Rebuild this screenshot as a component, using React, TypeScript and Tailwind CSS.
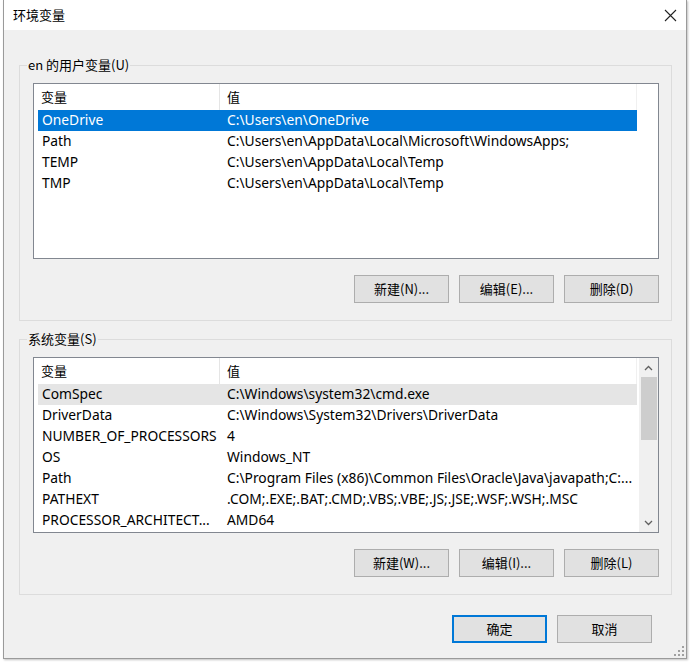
import React from 'react'

type EnvRow = {
  name: string
  value: string
}

const userVars: EnvRow[] = [
  { name: 'OneDrive', value: 'C:\\Users\\en\\OneDrive' },
  { name: 'Path', value: 'C:\\Users\\en\\AppData\\Local\\Microsoft\\WindowsApps;' },
  { name: 'TEMP', value: 'C:\\Users\\en\\AppData\\Local\\Temp' },
  { name: 'TMP', value: 'C:\\Users\\en\\AppData\\Local\\Temp' },
]

const systemVars: EnvRow[] = [
  { name: 'ComSpec', value: 'C:\\Windows\\system32\\cmd.exe' },
  { name: 'DriverData', value: 'C:\\Windows\\System32\\Drivers\\DriverData' },
  { name: 'NUMBER_OF_PROCESSORS', value: '4' },
  { name: 'OS', value: 'Windows_NT' },
  { name: 'Path', value: 'C:\\Program Files (x86)\\Common Files\\Oracle\\Java\\javapath;C:...' },
  { name: 'PATHEXT', value: '.COM;.EXE;.BAT;.CMD;.VBS;.VBE;.JS;.JSE;.WSF;.WSH;.MSC' },
  { name: 'PROCESSOR_ARCHITECT...', value: 'AMD64' },
]

const cjk = "font-['Microsoft_YaHei','Noto_Sans_CJK_SC',sans-serif]"
const latin = "font-['Segoe_UI','Noto_Sans','Noto_Sans_CJK_SC',sans-serif]"

function DialogButton({ label, primary }: { label: string; primary?: boolean }) {
  return (
    <button
      className={`w-[95px] h-[28px] flex items-center justify-center bg-[#e1e1e1] text-[13px] text-black ${cjk} ${
        primary ? 'border-2 border-[#0078d7]' : 'border border-[#adadad]'
      }`}
    >
      {label}
    </button>
  )
}

function VarList({
  rows,
  selected,
  hover,
  scrollbar,
}: {
  rows: EnvRow[]
  selected?: number
  hover?: number
  scrollbar?: boolean
}) {
  return (
    <div className="h-[176px] border border-[#828790] bg-white flex overflow-hidden">
      <div className="flex-1 flex flex-col">
        <div className="h-[26px] flex items-center text-[13px] text-black shrink-0">
          <div className={`w-[186px] pl-[7px] border-r border-[#e5e5e5] h-full flex items-center ${cjk}`}>变量</div>
          <div className={`w-[417px] pl-[7px] border-r border-[#f0f0f0] h-full flex items-center ${cjk}`}>值</div>
        </div>
        {rows.map((row, i) => (
          <div
            key={row.name + i}
            className={`ml-[4px] w-[599px] h-[21px] flex items-center text-[13.8px] whitespace-nowrap overflow-hidden ${latin} ${
              i === selected
                ? 'bg-[#0078d7] text-white'
                : i === hover
                  ? 'bg-[#e5e5e5] text-black'
                  : 'text-black'
            }`}
          >
            <div className="w-[182px] pl-[4px] overflow-hidden">{row.name}</div>
            <div className="w-[417px] pl-[7px] overflow-hidden">{row.value}</div>
          </div>
        ))}
      </div>
      {scrollbar && (
        <div className="w-[19px] bg-[#f0f0f0] flex flex-col items-center shrink-0">
          <div className="h-[19px] w-full flex items-center justify-center">
            <svg width="9" height="6" viewBox="0 0 9 6">
              <path d="M1 5 L4.5 1.5 L8 5" fill="none" stroke="#606060" strokeWidth="1.3" />
            </svg>
          </div>
          <div className="w-[16px] h-[63px] bg-[#cdcdcd]" />
          <div className="flex-1" />
          <div className="h-[19px] w-full flex items-center justify-center">
            <svg width="9" height="6" viewBox="0 0 9 6">
              <path d="M1 1 L4.5 4.5 L8 1" fill="none" stroke="#606060" strokeWidth="1.3" />
            </svg>
          </div>
        </div>
      )}
    </div>
  )
}

function GroupBox({
  label,
  children,
}: {
  label: string
  children: React.ReactNode
}) {
  return (
    <div className="relative h-[256px] border border-[#dcdcdc] pt-[17px] pl-[13px] pr-[12px]">
      <span className={`absolute -top-[10px] left-[7px] px-[1px] bg-[#f0f0f0] text-[13px] leading-[18px] text-black ${cjk}`}>
        {label}
      </span>
      {children}
    </div>
  )
}

export default function App() {
  return (
    <div className="min-h-screen bg-white">
      <div className="ml-[3px] w-[684px] h-[659px] border-x border-b border-[#9a9a9a] bg-[#f0f0f0] flex flex-col shadow-[1px_1px_2px_rgba(0,0,0,0.25)]">
        <div className="h-[30px] bg-white flex items-center justify-between pl-[9px] pr-[9px] shrink-0">
          <span className={`text-[13px] text-black ${cjk}`}>环境变量</span>
          <svg width="13" height="13" viewBox="0 0 13 13">
            <path d="M1 1 L12 12 M12 1 L1 12" stroke="#222" strokeWidth="1.1" />
          </svg>
        </div>

        <div className="pl-[15px] pr-[14px] pt-[35px] flex flex-col gap-[18px]">
          <GroupBox label="en 的用户变量(U)">
            <VarList rows={userVars} selected={0} />
            <div className="flex justify-end gap-[10px] mt-[16px]">
              <DialogButton label="新建(N)..." />
              <DialogButton label="编辑(E)..." />
              <DialogButton label="删除(D)" />
            </div>
          </GroupBox>

          <GroupBox label="系统变量(S)">
            <VarList rows={systemVars} hover={0} scrollbar />
            <div className="flex justify-end gap-[10px] mt-[16px]">
              <DialogButton label="新建(W)..." />
              <DialogButton label="编辑(I)..." />
              <DialogButton label="删除(L)" />
            </div>
          </GroupBox>
        </div>

        <div className="flex justify-end gap-[10px] pr-[34px] mt-[20px]">
          <DialogButton label="确定" primary />
          <DialogButton label="取消" />
        </div>

        <div className="flex-1 flex items-end justify-end pr-[2px] pb-[2px]">
          <svg width="10" height="10" viewBox="0 0 10 10">
            <g fill="#a0a0a0">
              <rect x="8" y="0" width="2" height="2" />
              <rect x="4" y="4" width="2" height="2" />
              <rect x="8" y="4" width="2" height="2" />
              <rect x="0" y="8" width="2" height="2" />
              <rect x="4" y="8" width="2" height="2" />
              <rect x="8" y="8" width="2" height="2" />
            </g>
          </svg>
        </div>
      </div>
    </div>
  )
}
